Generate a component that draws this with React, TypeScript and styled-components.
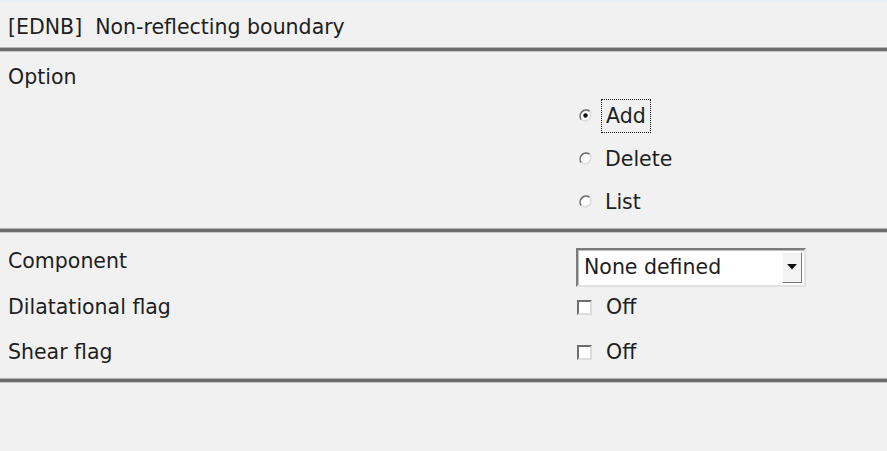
import styled, { createGlobalStyle } from "styled-components";

const GlobalStyle = createGlobalStyle`
  html, body {
    margin: 0;
    padding: 0;
    background: #f0f1f0;
  }
`

function Radio({ checked }: { checked?: boolean }) {
  return (
    <svg width="15" height="15" viewBox="0 0 15 15">
      <circle cx="7.5" cy="7.5" r="6" fill="#fff" />
      <path d="M11.7 3.3 A6 6 0 0 0 3.3 11.7" fill="none" stroke="#6e6e6e" strokeWidth="1.6" />
      <path d="M3.3 11.7 A6 6 0 0 0 11.7 3.3" fill="none" stroke="#dcdcdc" strokeWidth="1.6" />
      {checked && <circle cx="7.5" cy="7.5" r="2.2" fill="#111" />}
    </svg>
  )
}

function Arrow() {
  return (
    <svg width="10" height="6" viewBox="0 0 10 6">
      <path d="M0 0 H10 L5 5.5 Z" fill="#111" />
    </svg>
  )
}

export default function App() {
  return (
    <Page>
      <GlobalStyle />
      <Header>[EDNB]&nbsp; Non-reflecting boundary</Header>
      <Divider />
      <OptionSection>
        <Label>Option</Label>
        <RadioList>
          <RadioRow>
            <Radio checked />
            <Focused>Add</Focused>
          </RadioRow>
          <RadioRow>
            <Radio />
            <span>Delete</span>
          </RadioRow>
          <RadioRow>
            <Radio />
            <span>List</span>
          </RadioRow>
        </RadioList>
      </OptionSection>
      <Divider />
      <FieldSection>
        <FieldRow $h={44}>
          <Label $top>Component</Label>
          <Select>
            <span>None defined</span>
            <DropButton><Arrow /></DropButton>
          </Select>
        </FieldRow>
        <FieldRow $h={36}>
          <Label>Dilatational flag</Label>
          <CheckRow>
            <Check />
            <span>Off</span>
          </CheckRow>
        </FieldRow>
        <FieldRow $h={54}>
          <Label>Shear flag</Label>
          <CheckRow>
            <Check />
            <span>Off</span>
          </CheckRow>
        </FieldRow>
      </FieldSection>
      <Divider />
      <Footer />
    </Page>
  )
}

const Page = styled.div`
  width: 887px;
  height: 451px;
  overflow: hidden;
  background: #f0f1f0;
  border-top: 3px solid #e6eef6;
  box-sizing: border-box;
  font-family: "DejaVu Sans", "Liberation Sans", sans-serif;
  font-size: 20.5px;
  color: #1e1e1e;
`

const Header = styled.div`
  height: 44px;
  display: flex;
  align-items: center;
  padding: 4px 0 0 8px;
  box-sizing: border-box;
  white-space: pre;
`

const Divider = styled.div`
  height: 3px;
  background: #6c6c6c;
  border-top: 1px solid #b4b4b4;
  border-bottom: 1px solid #c8c8c8;
`

const OptionSection = styled.div`
  height: 176px;
  display: grid;
  grid-template-columns: 576px 1fr;
  grid-template-rows: 26px 1fr;
  row-gap: 4px;
  padding-top: 12px;
  box-sizing: border-box;
`

const Label = styled.div<{ $top?: boolean }>`
  padding-left: 8px;
  line-height: 26px;
  align-self: ${p => (p.$top ? "start" : "center")};
  margin-top: ${p => (p.$top ? "3px" : "0")};
  grid-column: 1;
`

const RadioList = styled.div`
  grid-column: 2;
  grid-row: 2;
  display: flex;
  flex-direction: column;
`

const RadioRow = styled.div`
  height: 43px;
  flex-shrink: 0;
  display: flex;
  align-items: center;
  gap: 12px;
  padding-left: 2px;
`

const Focused = styled.span`
  outline: 1px dotted #111;
  outline-offset: 0;
  padding: 2px 4px;
  margin-left: -3px;
  line-height: 28px;
`

const FieldSection = styled.div`
  height: 145px;
  padding-top: 12px;
  box-sizing: border-box;
`

const FieldRow = styled.div<{ $h: number }>`
  height: ${p => p.$h}px;
  display: grid;
  grid-template-columns: 576px 1fr;
  align-items: center;
`

const Select = styled.div`
  width: 230px;
  height: 39px;
  box-sizing: border-box;
  display: flex;
  align-items: center;
  justify-content: space-between;
  padding: 0 2px 0 6px;
  background: #fff;
  border: 2px solid;
  border-color: #7c7c7c #e2e2e2 #e2e2e2 #7c7c7c;
  box-shadow: inset 1px 1px 0 #bdbdbd;
`

const DropButton = styled.div`
  width: 20px;
  height: 31px;
  display: flex;
  align-items: center;
  justify-content: center;
  background: #f3f3f3;
  border: 1px solid;
  border-color: #fff #7a7a7a #7a7a7a #fff;
  box-sizing: border-box;
`

const CheckRow = styled.div`
  display: flex;
  align-items: center;
  gap: 14px;
  padding-left: 1px;
`

const Check = styled.div`
  width: 15px;
  height: 15px;
  box-sizing: border-box;
  background: #fff;
  border: 2px solid;
  border-color: #6e6e6e #dcdcdc #dcdcdc #6e6e6e;
`

const Footer = styled.div`
  flex: 1;
`
